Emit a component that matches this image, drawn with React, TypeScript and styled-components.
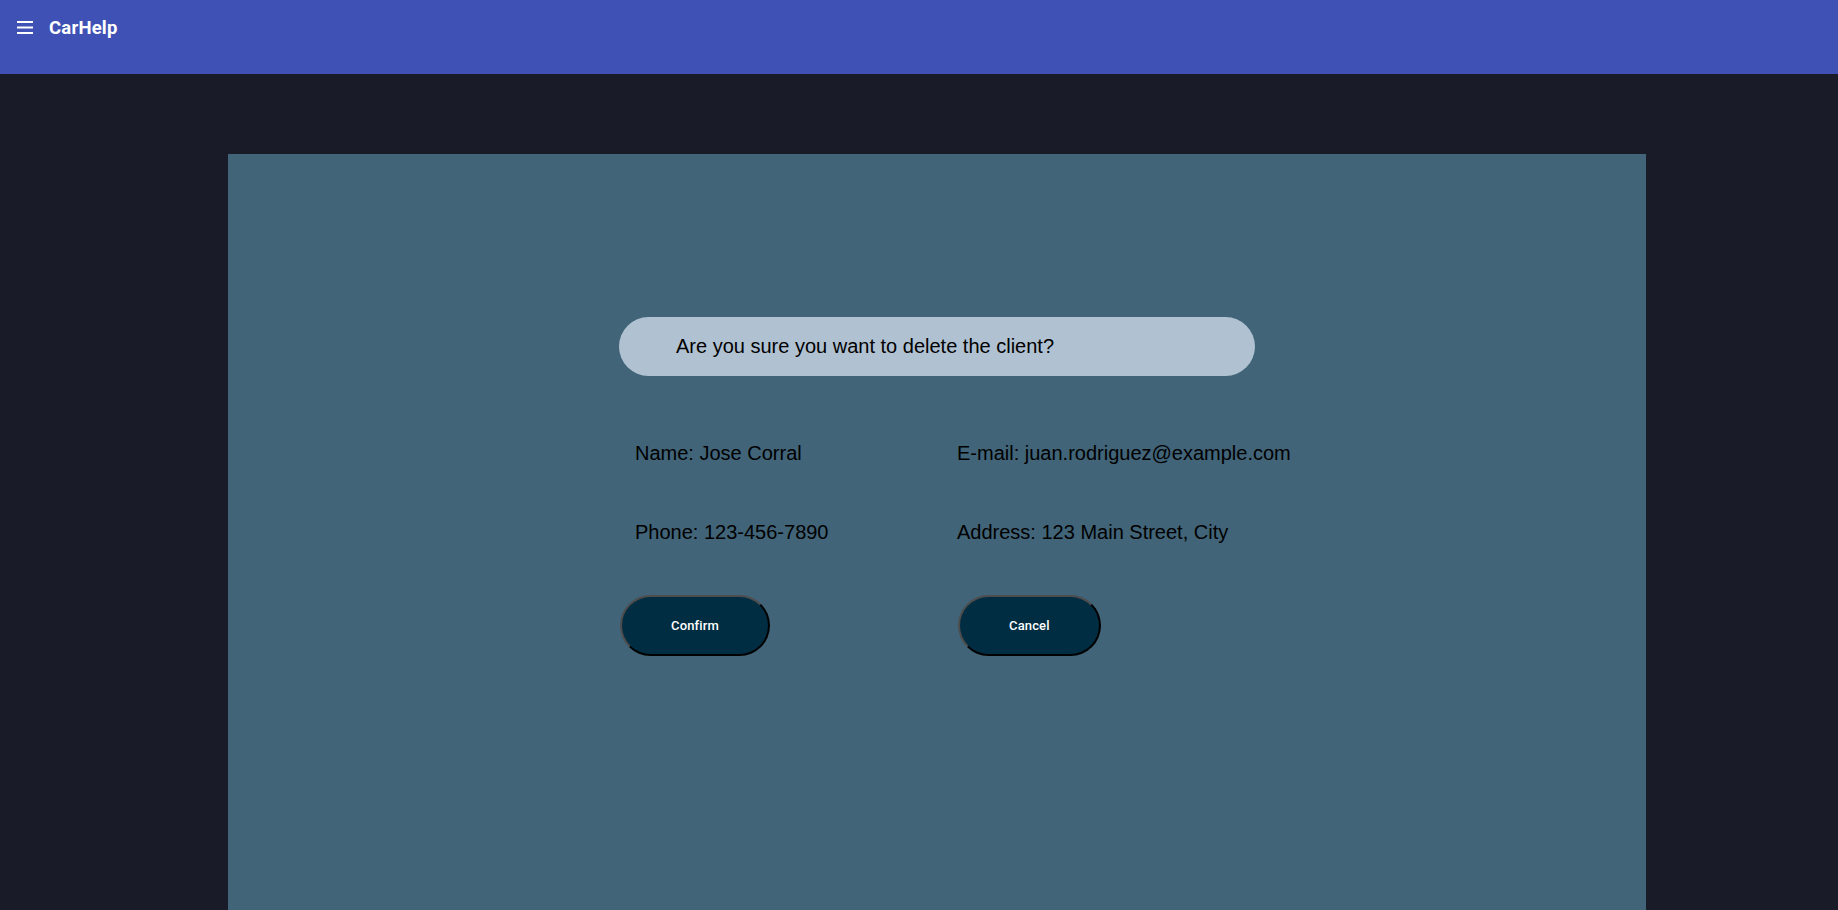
import React from "react";
import styled, { createGlobalStyle } from "styled-components";

const GlobalStyle = createGlobalStyle`
  html, body {
    margin: 0;
    padding: 0;
    background: #191b28;
    overflow: hidden;
  }
  body {
    font-family: "Liberation Sans", Arial, sans-serif;
  }
  * { box-sizing: border-box; }
`;

const Page = styled.div`
  width: 1838px;
  height: 910px;
  background: #191b28;
  display: flex;
  flex-direction: column;
`;

const Header = styled.header`
  height: 74px;
  background: #3f51b5;
  flex-shrink: 0;
`;

const Toolbar = styled.div`
  height: 56px;
  display: flex;
  align-items: center;
  padding-left: 17px;
  gap: 16px;
`;

const MenuButton = styled.button`
  border: none;
  background: transparent;
  padding: 0;
  width: 16px;
  height: 14px;
  display: flex;
  cursor: pointer;
`;

const Brand = styled.span`
  font-family: Roboto, "Liberation Sans", sans-serif;
  font-weight: 700;
  font-size: 18.5px;
  color: #ffffff;
  letter-spacing: 0.2px;
`;

const Main = styled.main`
  flex: 1;
  padding: 80px 0 0 228px;
  display: flex;
`;

const Panel = styled.section`
  width: 1418px;
  height: 756px;
  background: #416478;
  display: flex;
  flex-direction: column;
  align-items: center;
  padding-top: 163px;
`;

const Content = styled.div`
  width: 636px;
  display: flex;
  flex-direction: column;
`;

const Question = styled.div`
  height: 59px;
  border-radius: 30px;
  background: #b0c2d2;
  display: flex;
  align-items: center;
  padding-left: 57px;
  font-size: 20px;
  line-height: 23px;
  color: #000;
`;

const InfoGrid = styled.div`
  margin-top: 66px;
  display: grid;
  grid-template-columns: 338px 1fr;
  row-gap: 56px;
`;

const InfoItem = styled.div<{ $indent?: boolean }>`
  font-size: 20px;
  line-height: 23px;
  color: #000;
  padding-left: ${(p) => (p.$indent ? "16px" : "0")};
  white-space: nowrap;
`;

const Actions = styled.div`
  margin-top: 51px;
  display: grid;
  grid-template-columns: 339px 1fr;
  align-items: start;
`;

const PillButton = styled.button<{ $offset?: number }>`
  justify-self: start;
  margin-left: ${(p) => p.$offset ?? 0}px;
  height: 61px;
  padding: 0 49px;
  border-radius: 31px;
  border-width: 2px;
  border-style: solid;
  border-color: #4d4d4d #000 #000 #4d4d4d;
  background: #002d42;
  color: #ffffff;
  font-family: Roboto, "Liberation Sans", sans-serif;
  font-weight: 500;
  font-size: 13px;
  letter-spacing: 0.15px;
  cursor: pointer;
`;

const MenuIcon = () => (
  <svg width="16" height="14" viewBox="0 0 16 14" fill="#ffffff">
    <rect x="0" y="0" width="16" height="2" />
    <rect x="0" y="5.5" width="16" height="2" />
    <rect x="0" y="11" width="16" height="2" />
  </svg>
);

export default function App() {
  return (
    <>
      <GlobalStyle />
      <Page>
        <Header>
          <Toolbar>
            <MenuButton aria-label="menu">
              <MenuIcon />
            </MenuButton>
            <Brand>CarHelp</Brand>
          </Toolbar>
        </Header>
        <Main>
          <Panel>
            <Content>
              <Question>Are you sure you want to delete the client?</Question>
              <InfoGrid>
                <InfoItem $indent>Name: Jose Corral</InfoItem>
                <InfoItem>E-mail: juan.rodriguez@example.com</InfoItem>
                <InfoItem $indent>Phone: 123-456-7890</InfoItem>
                <InfoItem>Address: 123 Main Street, City</InfoItem>
              </InfoGrid>
              <Actions>
                <PillButton $offset={1}>Confirm</PillButton>
                <PillButton>Cancel</PillButton>
              </Actions>
            </Content>
          </Panel>
        </Main>
      </Page>
    </>
  );
}
